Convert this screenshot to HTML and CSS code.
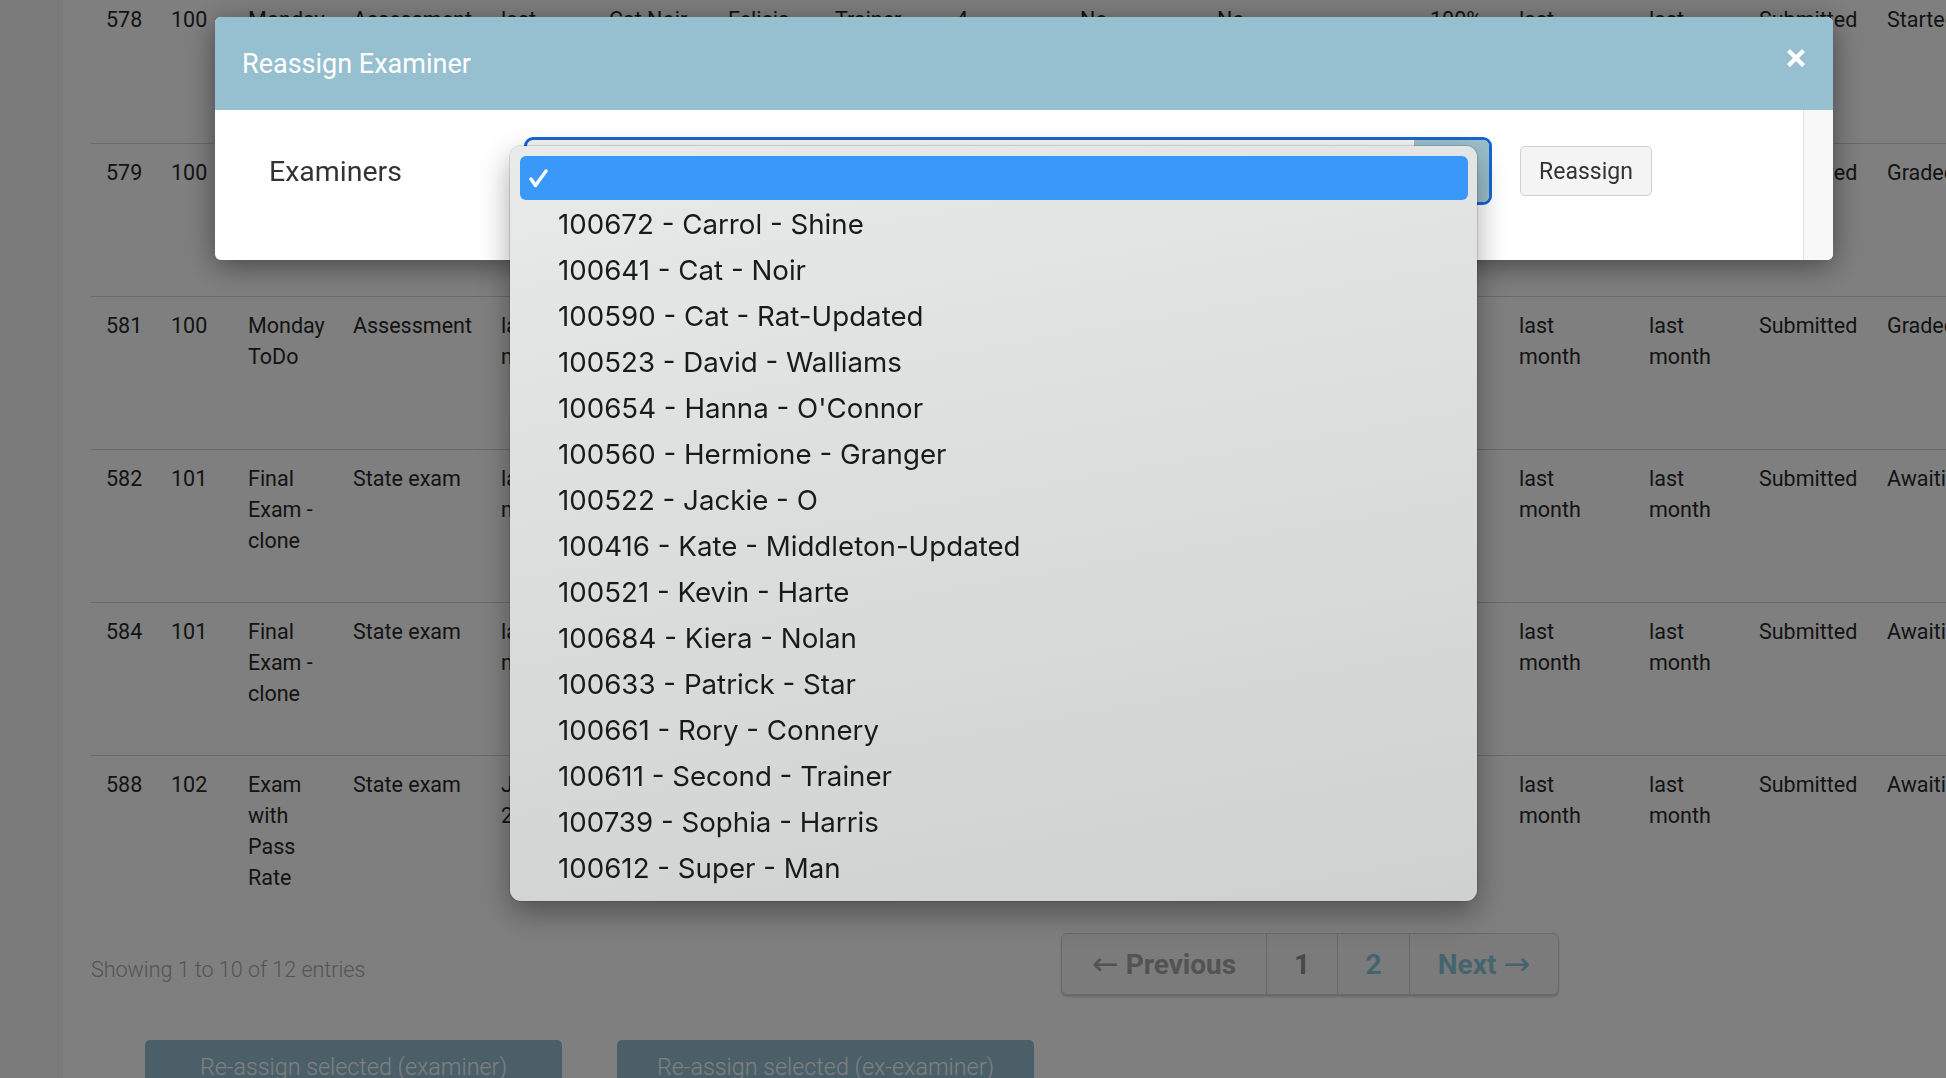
FILE: index.html
```html
<!DOCTYPE html>
<html lang="en">
<head>
    <meta charset="UTF-8">
    <meta name="viewport" content="width=device-width, initial-scale=1.0">
    <title>Exam Submissions</title>
    <link rel="stylesheet" href="styles.css">
</head>
<body>
    <div class="page">
        <div class="rows">
            <div class="row">
                <div>578</div><div>100</div><div>Monday ToDo</div><div>Assessment</div><div class="stack">last month</div>
                <div>Cat Noir</div><div>Felicia</div><div>Trainer</div><div>4</div><div>No</div><div>No</div>
                <div>100%</div><div class="stack">last month</div><div class="stack">last month</div><div>Submitted</div><div>Started</div>
            </div>
            <div class="row">
                <div>579</div><div>100</div><div>Monday ToDo</div><div>Assessment</div><div class="stack">last month</div>
                <div>Cat Noir</div><div>Felicia</div><div>Trainer</div><div>4</div><div>No</div><div>No</div>
                <div>100%</div><div class="stack">last month</div><div class="stack">last month</div><div>Submitted</div><div>Graded</div>
            </div>
            <div class="row">
                <div>581</div><div>100</div><div>Monday ToDo</div><div>Assessment</div><div class="stack">last month</div>
                <div>Kevin Harte</div><div>Kevin</div><div>Trainer</div><div>2</div><div>No</div><div>No</div>
                <div>Pass</div><div class="stack">last month</div><div class="stack">last month</div><div>Submitted</div><div>Graded</div>
            </div>
            <div class="row">
                <div>582</div><div>101</div><div>Final Exam - clone</div><div>State exam</div><div class="stack">last month</div>
                <div>Kiera Nolan</div><div>Kiera</div><div>Examiner</div><div>1</div><div>No</div><div>No</div>
                <div>0%</div><div class="stack">last month</div><div class="stack">last month</div><div>Submitted</div><div>Awaiting marking</div>
            </div>
            <div class="row">
                <div>584</div><div>101</div><div>Final Exam - clone</div><div>State exam</div><div class="stack">last month</div>
                <div>Rory Connery</div><div>Rory</div><div>Examiner</div><div>1</div><div>No</div><div>No</div>
                <div>0%</div><div class="stack">last month</div><div class="stack">last month</div><div>Submitted</div><div>Awaiting marking</div>
            </div>
            <div class="row">
                <div>588</div><div>102</div><div>Exam with Pass Rate</div><div>State exam</div><div class="stack">June 2023</div>
                <div>Sophia Harris</div><div>Sophia</div><div>Examiner</div><div>3</div><div>No</div><div>Yes</div>
                <div>0%</div><div class="stack">last month</div><div class="stack">last month</div><div>Submitted</div><div>Awaiting marking</div>
            </div>
        </div>

        <div class="table-foot">
            <div class="info">Showing 1 to 10 of 12 entries</div>
            <ul class="pager">
                <li class="prev"><span class="arrow">&larr;</span>&nbsp;Previous</li>
                <li class="current">1</li>
                <li class="link">2</li>
                <li class="link next">Next&nbsp;<span class="arrow">&rarr;</span></li>
            </ul>
        </div>

        <div class="bulk-actions">
            <button class="bulk-btn">Re-assign selected (examiner)</button>
            <button class="bulk-btn">Re-assign selected (ex-examiner)</button>
        </div>
    </div>

    <div class="backdrop"></div>

    <div class="modal">
        <div class="modal-header">
            <h4 class="modal-title">Reassign Examiner</h4>
            <button class="close">
                <svg width="18" height="18" viewBox="0 0 18 18">
                    <path d="M3 0 L9 6 L15 0 L18 3 L12 9 L18 15 L15 18 L9 12 L3 18 L0 15 L6 9 L0 3 Z" fill="#fff"/>
                </svg>
            </button>
        </div>
        <div class="modal-body">
            <div class="form-row">
                <label class="form-label">Examiners</label>
                <div class="select-wrap">
                    <div class="select-box">
                        <div class="select-arrow"></div>
                    </div>
                    <ul class="select-menu">
                        <li class="option selected">
                            <svg width="19" height="19" viewBox="0 0 19 19">
                                <polyline points="2,10 6.5,16.5 17,2" fill="none" stroke="#fff" stroke-width="3.4" stroke-linecap="round" stroke-linejoin="round"/>
                            </svg>
                        </li>
                        <li class="option">100672 - Carrol - Shine</li>
                        <li class="option">100641 - Cat - Noir</li>
                        <li class="option">100590 - Cat - Rat-Updated</li>
                        <li class="option">100523 - David - Walliams</li>
                        <li class="option">100654 - Hanna - O'Connor</li>
                        <li class="option">100560 - Hermione - Granger</li>
                        <li class="option">100522 - Jackie - O</li>
                        <li class="option">100416 - Kate - Middleton-Updated</li>
                        <li class="option">100521 - Kevin - Harte</li>
                        <li class="option">100684 - Kiera - Nolan</li>
                        <li class="option">100633 - Patrick - Star</li>
                        <li class="option">100661 - Rory - Connery</li>
                        <li class="option">100611 - Second - Trainer</li>
                        <li class="option">100739 - Sophia - Harris</li>
                        <li class="option">100612 - Super - Man</li>
                    </ul>
                </div>
                <button class="btn-reassign">Reassign</button>
            </div>
            <div class="scroll-track"></div>
        </div>
    </div>
</body>
</html>
```

FILE: styles.css
```css
* {
    margin: 0;
    padding: 0;
    box-sizing: border-box;
}

body {
    font-family: Roboto, "Liberation Sans", sans-serif;
    background: #f4f4f4;
    color: #292929;
    height: 100vh;
    overflow: hidden;
}

.page {
    margin-left: 63px;
    margin-top: -10px;
    padding-left: 28px;
    background: #fff;
    min-height: 1200px;
}

/* submissions table */
.row {
    display: grid;
    grid-template-columns: 65px 77px 105px 148px 108px 119px 107px 121px 124px 137px 213px 89px 130px 110px 128px 220px;
    height: 153px;
    border-top: 1px solid #d7d7d7;
    font-size: 21.5px;
    line-height: 31px;
}

.row:first-child {
    border-top-color: transparent;
}

.row > div {
    padding: 13px 10px 0 15px;
}

.row > .stack {
    width: min-content;
}

.table-foot {
    display: flex;
    align-items: flex-start;
    margin-top: 25px;
}

.info {
    width: 970px;
    padding-top: 21px;
    font-size: 21.5px;
    line-height: 31px;
    font-weight: 300;
    color: #a8a8a8;
}

.pager {
    display: flex;
    list-style: none;
    border: 1px solid #d4d4d4;
    border-radius: 6px;
    background: #f7f7f7;
    box-shadow: 0 2px 2px rgba(0, 0, 0, 0.18);
    overflow: hidden;
}

.pager li {
    height: 60px;
    display: flex;
    align-items: center;
    justify-content: center;
    font-size: 28px;
    font-weight: 700;
    border-left: 1px solid #d0d0d0;
}

.pager .prev {
    width: 204px;
    border-left: none;
    color: #a6a6a6;
}

.pager .current {
    width: 71px;
    color: #929292;
}

.pager .link {
    width: 72px;
    color: #8dc8dc;
}

.pager .next {
    width: 149px;
}

.pager .arrow {
    font-family: "DejaVu Sans", sans-serif;
    font-size: 32px;
    font-weight: 400;
    line-height: 1;
}

.bulk-actions {
    display: flex;
    gap: 55px;
    margin-top: 45px;
    padding-left: 54px;
}

.bulk-btn {
    width: 417px;
    padding: 12px 0;
    line-height: 31px;
    background: #95bfcf;
    color: #fff;
    border: none;
    border-radius: 5px;
    font-family: Roboto, "Liberation Sans", sans-serif;
    font-size: 23.3px;
    font-weight: 300;
}

/* modal */
.backdrop {
    position: fixed;
    inset: 0;
    background: rgba(0, 0, 0, 0.5);
}

.modal {
    position: fixed;
    left: 215px;
    top: 17px;
    width: 1618px;
    background: #fff;
    border-radius: 6px;
    box-shadow: 0 6px 30px rgba(0, 0, 0, 0.45);
}

.modal-header {
    height: 93px;
    display: flex;
    align-items: center;
    justify-content: space-between;
    padding: 0 28px 0 27px;
    background: #96bfcf;
    border-radius: 6px 6px 0 0;
}

.modal-title {
    color: #fff;
    font-size: 27px;
    font-weight: 400;
}

.close {
    align-self: flex-start;
    margin-top: 32px;
    width: 18px;
    height: 18px;
    background: none;
    border: none;
    display: flex;
}

.modal-body {
    display: flex;
    height: 150px;
}

.form-row {
    flex: 1;
    display: flex;
    align-items: center;
    align-self: flex-start;
    padding: 27px 0 0 54px;
}

.form-label {
    width: 255px;
    font-size: 28.5px;
    color: #333;
}

.select-wrap {
    position: relative;
    width: 968px;
    height: 68px;
}

.select-box {
    display: flex;
    height: 100%;
    border: 3px solid #1766d1;
    border-radius: 9px;
    background: #f5f5f5;
    overflow: hidden;
}

.select-arrow {
    margin-left: auto;
    width: 75px;
    background: #9bbfcb;
}

.select-menu {
    position: absolute;
    top: 9px;
    left: -14px;
    width: 967px;
    padding: 10px 9px 11px 10px;
    list-style: none;
    border-radius: 11px;
    background: linear-gradient(170deg, #e9eaea 0%, #dcdede 45%, #cfd1d1 100%);
    box-shadow: 0 0 0 1px rgba(0, 0, 0, 0.12), 0 12px 30px rgba(0, 0, 0, 0.35);
    z-index: 2;
}

.option {
    position: relative;
    height: 44px;
    margin-bottom: 2px;
    display: flex;
    align-items: center;
    padding-left: 38px;
    font-family: Inter, "Liberation Sans", sans-serif;
    font-size: 27.7px;
    color: #1a1a1a;
    border-radius: 6px;
}

.option:last-child {
    margin-bottom: 0;
}

.option.selected {
    background: #3a98f9;
}

.option svg {
    position: absolute;
    left: 9px;
    top: 13px;
}

.btn-reassign {
    margin-left: 28px;
    width: 132px;
    height: 50px;
    background: #f4f4f4;
    border: 1px solid #cfcfcf;
    border-radius: 5px;
    font-family: Roboto, "Liberation Sans", sans-serif;
    font-size: 23px;
    color: #333;
}

.scroll-track {
    width: 30px;
    background: #f8f8f8;
    border-left: 1px solid #e2e2e2;
    border-radius: 0 0 6px 0;
}
```
